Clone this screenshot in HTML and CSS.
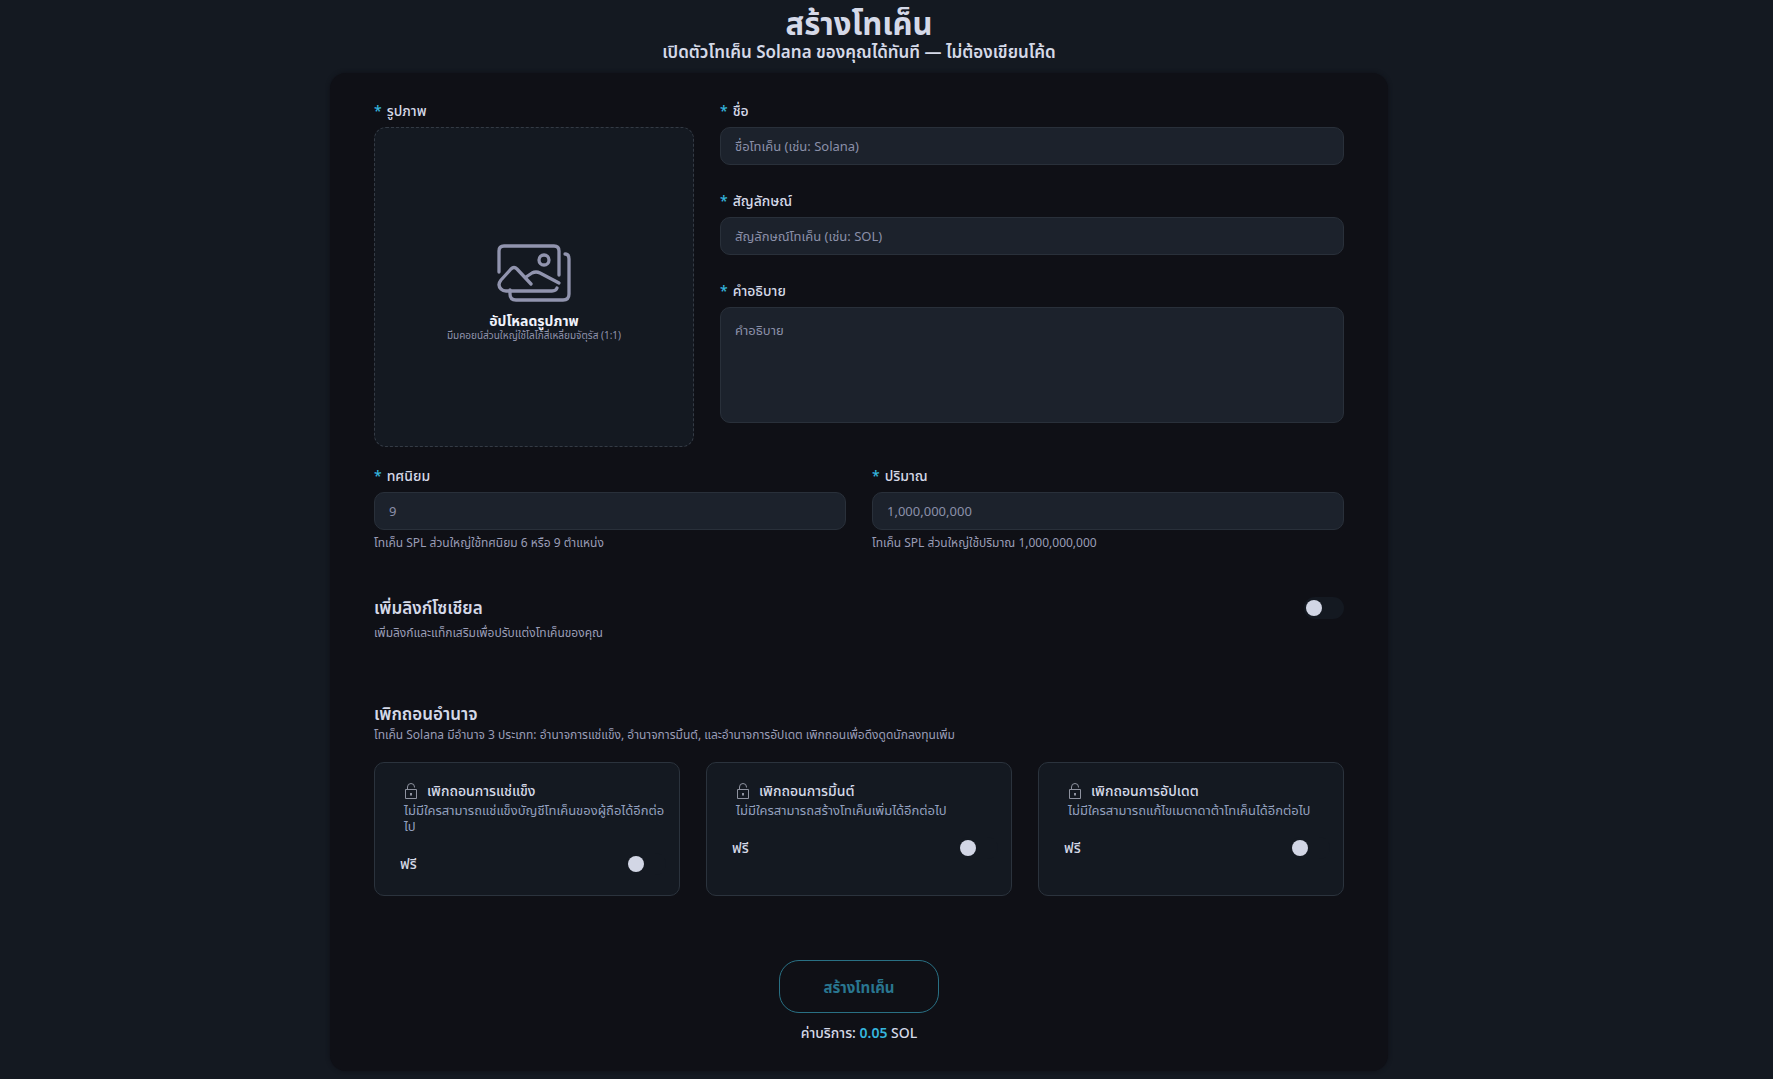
FILE: index.html
```html
<!DOCTYPE html>
<html lang="th">
<head>
  <meta charset="UTF-8" />
  <meta name="viewport" content="width=device-width, initial-scale=1.0" />
  <title>สร้างโทเค็น</title>
  <link rel="stylesheet" href="styles.css">
</head>
<body>
  <div class="page">
    <header class="header">
      <h1>สร้างโทเค็น</h1>
      <p>เปิดตัวโทเค็น Solana ของคุณได้ทันที — ไม่ต้องเขียนโค้ด</p>
    </header>

    <form class="card">
      <div class="top-row">
        <div class="field upload-field">
          <label for="image"><span class="req">*</span>รูปภาพ</label>
          <button type="button" class="upload" id="image">
            <svg class="upload-icon" viewBox="0 0 76 60" fill="none" stroke="currentColor" stroke-width="3.300" stroke-linecap="round" stroke-linejoin="round">
              <path d="M3 29V8q0-5 5-5h50q5 0 5 5v24" />
              <path d="M69 11q4 0 4 5v35q0 6-6 6H20q-6 0-6-6v-4" />
              <path d="M63 40 44 30q-4-2-8 0l-6 4" />
              <path d="M35 41 21 26q-3-3-6 0L5 37q-4 5 0 9 2 2 5 2h46q4 0 5-3" />
              <circle cx="48" cy="17" r="5" />
            </svg>
            <span class="upload-title">อัปโหลดรูปภาพ</span>
            <span class="upload-hint">มีมคอยน์ส่วนใหญ่ใช้โลโก้สี่เหลี่ยมจัตุรัส (1:1)</span>
          </button>
        </div>

        <div class="fields">
          <div class="field">
            <label for="name"><span class="req">*</span>ชื่อ</label>
            <input type="text" id="name" placeholder="ชื่อโทเค็น (เช่น: Solana)">
          </div>
          <div class="field">
            <label for="symbol"><span class="req">*</span>สัญลักษณ์</label>
            <input type="text" id="symbol" placeholder="สัญลักษณ์โทเค็น (เช่น: SOL)">
          </div>
          <div class="field">
            <label for="description"><span class="req">*</span>คำอธิบาย</label>
            <textarea id="description" placeholder="คำอธิบาย"></textarea>
          </div>
        </div>
      </div>

      <div class="supply-row">
        <div class="field">
          <label for="decimals"><span class="req">*</span>ทศนิยม</label>
          <input type="text" id="decimals" placeholder="9">
          <p class="hint">โทเค็น SPL ส่วนใหญ่ใช้ทศนิยม 6 หรือ 9 ตำแหน่ง</p>
        </div>
        <div class="field">
          <label for="supply"><span class="req">*</span>ปริมาณ</label>
          <input type="text" id="supply" placeholder="1,000,000,000">
          <p class="hint">โทเค็น SPL ส่วนใหญ่ใช้ปริมาณ 1,000,000,000</p>
        </div>
      </div>

      <section class="social">
        <div class="social-head">
          <h2><label for="social">เพิ่มลิงก์โซเชียล</label></h2>
          <input type="checkbox" class="toggle" id="social">
        </div>
        <p class="hint">เพิ่มลิงก์และแท็กเสริมเพื่อปรับแต่งโทเค็นของคุณ</p>
      </section>

      <section class="revoke">
        <h2>เพิกถอนอำนาจ</h2>
        <p class="hint">โทเค็น Solana มีอำนาจ 3 ประเภท: อำนาจการแช่แข็ง, อำนาจการมิ้นต์, และอำนาจการอัปเดต เพิกถอนเพื่อดึงดูดนักลงทุนเพิ่ม</p>
        <div class="options">
          <div class="option">
            <div class="option-text">
              <h3>
                <svg class="lock" viewBox="0 0 14 17" fill="none" stroke="currentColor"><path d="M1.5 6.5h11v9h-11zM3.500 6.500V4a3.500 3.500 0 0 1 7 0v.5" /><path d="M7 10v2.500" stroke-width="2" /></svg>
                <label for="freeze">เพิกถอนการแช่แข็ง</label>
              </h3>
              <p>ไม่มีใครสามารถแช่แข็งบัญชีโทเค็นของผู้ถือได้อีกต่อ<wbr>ไป</p>
            </div>
            <div class="option-foot">
              <span>ฟรี</span>
              <input type="checkbox" class="toggle" id="freeze">
            </div>
          </div>
          <div class="option">
            <div class="option-text">
              <h3>
                <svg class="lock" viewBox="0 0 14 17" fill="none" stroke="currentColor"><path d="M1.5 6.5h11v9h-11zM3.500 6.500V4a3.500 3.500 0 0 1 7 0v.5" /><path d="M7 10v2.500" stroke-width="2" /></svg>
                <label for="mint">เพิกถอนการมิ้นต์</label>
              </h3>
              <p>ไม่มีใครสามารถสร้างโทเค็นเพิ่มได้อีกต่อไป</p>
            </div>
            <div class="option-foot">
              <span>ฟรี</span>
              <input type="checkbox" class="toggle" id="mint">
            </div>
          </div>
          <div class="option">
            <div class="option-text">
              <h3>
                <svg class="lock" viewBox="0 0 14 17" fill="none" stroke="currentColor"><path d="M1.5 6.5h11v9h-11zM3.500 6.500V4a3.500 3.500 0 0 1 7 0v.5" /><path d="M7 10v2.500" stroke-width="2" /></svg>
                <label for="update">เพิกถอนการอัปเดต</label>
              </h3>
              <p>ไม่มีใครสามารถแก้ไขเมตาดาต้าโทเค็นได้อีกต่อไป</p>
            </div>
            <div class="option-foot">
              <span>ฟรี</span>
              <input type="checkbox" class="toggle" id="update">
            </div>
          </div>
        </div>
      </section>

      <div class="submit">
        <button type="button" class="btn">สร้างโทเค็น</button>
        <p>ค่าบริการ: <span class="price">0.05</span> SOL</p>
      </div>
    </form>
  </div>
</body>
</html>
```
FILE: styles.css
```css
* {
  box-sizing: border-box;
}
body {
  margin: 0;
  background: #141921;
  color: #d5d9e8;
  font-family: "Noto Sans", "Noto Sans Thai", sans-serif;
  font-size: 14px;
  line-height: 20px;
}
h1, h2, h3, p {
  margin: 0;
}
input, textarea, button {
  font-family: inherit;
}
.page {
  padding: 6px 55px 4px 0;
}
.header {
  text-align: center;
}
.header h1 {
  font-size: 31px;
  line-height: 34px;
}
.header p {
  font-size: 17px;
  font-weight: 600;
  line-height: 24px;
  margin-bottom: 9px;
}
.card {
  max-width: 1058px;
  margin: 0 auto;
  padding: 28px 44px;
  background: #0f1016;
  border-radius: 16px;
  box-shadow: 0 0 4px #0f1016;
}
.top-row {
  display: flex;
  gap: 26px;
}
.upload-field {
  width: 320px;
  flex-shrink: 0;
}
.fields {
  flex: 1;
  display: flex;
  flex-direction: column;
  gap: 26px;
}
.field {
  display: flex;
  flex-direction: column;
}
.field label {
  margin-bottom: 6px;
  font-weight: 500;
}
.req {
  color: #35b5dd;
  margin-right: 5px;
}
.upload {
  display: flex;
  flex-direction: column;
  align-items: center;
  justify-content: center;
  width: 100%;
  aspect-ratio: 1;
  padding: 10px 0 0;
  border: 1px dashed #343b45;
  border-radius: 12px;
  background: #141921;
  color: #9194ae;
  cursor: pointer;
}
.upload-icon {
  width: 76px;
  height: 60px;
  margin-bottom: 10px;
}
.upload-title {
  color: #f0f2fa;
  font-size: 14px;
  font-weight: 700;
  line-height: 16px;
}
.upload-hint {
  font-size: 10px;
  line-height: 12px;
}
.field input, .field textarea {
  width: 100%;
  height: 38px;
  padding: 0 14px;
  border: 1px solid #29303a;
  border-radius: 10px;
  background: #1c222c;
  color: #d5d9e8;
  font-size: 13px;
}
.field textarea {
  display: block;
  height: 116px;
  padding: 12px 14px;
  line-height: 20px;
  resize: none;
}
::placeholder {
  color: #8b90a9;
}
.supply-row {
  display: grid;
  grid-template-columns: 1fr 1fr;
  gap: 26px;
  margin-top: 19px;
}
.hint {
  color: #9a9db6;
  font-size: 12px;
  line-height: 18px;
}
.field .hint {
  margin-top: 4px;
}
h2 {
  font-size: 17px;
  font-weight: 600;
  line-height: 24px;
}
.social {
  margin-top: 44px;
}
.social-head {
  display: flex;
  justify-content: space-between;
  align-items: center;
  margin-bottom: 4px;
}
.toggle {
  appearance: none;
  width: 40px;
  height: 22px;
  margin: 0;
  padding: 3px 2px;
  border-radius: 11px;
  background: #141921;
  cursor: pointer;
}
.toggle::before {
  content: "";
  display: block;
  width: 16px;
  height: 16px;
  border-radius: 50%;
  background: #d2d6e5;
}
.toggle:checked::before {
  margin-left: auto;
  background: #35b5dd;
}
.revoke {
  margin-top: 60px;
}
.options {
  display: grid;
  grid-template-columns: repeat(3, 1fr);
  gap: 26px;
  margin-top: 18px;
}
.option {
  padding: 18px 13px 20px 25px;
  border: 1px solid #2b333d;
  border-radius: 10px;
  background: #141921;
}
.option-text {
  padding-left: 4px;
}
.option h3 {
  display: flex;
  align-items: center;
  gap: 9px;
  margin-bottom: 1px;
  font-size: 14px;
  font-weight: 500;
  line-height: 20px;
}
.lock {
  width: 14px;
  height: 17px;
  color: #8e929f;
}
.option p {
  color: #93a0bf;
  font-size: 13px;
  line-height: 16px;
}
.option-foot {
  display: flex;
  justify-content: space-between;
  align-items: center;
  margin-top: 19px;
  font-weight: 500;
}
.submit {
  display: flex;
  flex-direction: column;
  align-items: center;
  gap: 10px;
  margin-top: 64px;
  font-weight: 500;
}
.btn {
  width: 160px;
  height: 53px;
  padding: 3px 0 0;
  border: 1px solid #297084;
  border-radius: 20px;
  background: transparent;
  color: #297690;
  font-size: 15px;
  font-weight: 700;
  cursor: pointer;
}
.price {
  color: #35b5dd;
  font-weight: 600;
}
```
